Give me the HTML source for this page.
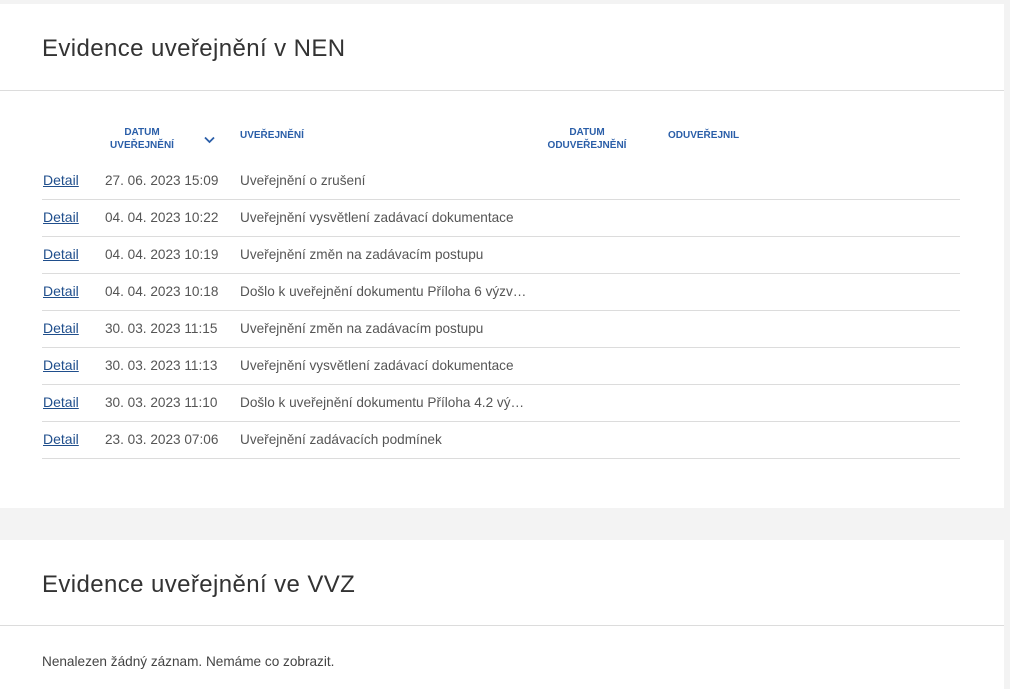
<!DOCTYPE html>
<html><head><meta charset="utf-8"><style>
body{margin:0;width:1010px;height:689px;background:#f3f3f3;font-family:"Liberation Sans",sans-serif;position:relative;overflow:hidden;color:#444}
.card{position:absolute;left:0;width:1004px;background:#fff}
.t{position:absolute;left:42px;font-size:24px;letter-spacing:0.4px;color:#333;white-space:nowrap}
.hr{position:absolute;left:0;width:1004px;height:1px;background:#dcdcdc}
.h{position:absolute;font-size:10px;font-weight:bold;color:#2a5ea8;text-align:center;line-height:13px}
.row{position:absolute;left:42px;width:918px;height:37px;border-bottom:1px solid #dcdcdc;font-size:13.6px;color:#555}
.row span{position:absolute;top:11px;white-space:nowrap}
.row span.l{top:10px}
a{color:#1f4e8c;text-decoration:underline;font-size:14px}
</style></head><body>
<div class="card" style="top:4px;height:504px">
<div class="t" style="top:31px">Evidence uveřejnění v NEN</div>
<div class="hr" style="top:86px"></div>
<div class="h" style="left:110px;top:122px;width:64px">DATUM<br>UVEŘEJNĚNÍ</div>
<svg style="position:absolute;left:204px;top:132px" width="11" height="8" viewBox="0 0 11 8"><path d="M1 1.5 L5.5 6 L10 1.5" stroke="#2a5ea8" stroke-width="1.8" fill="none"/></svg>
<div class="h" style="left:240px;top:125px">UVEŘEJNĚNÍ</div>
<div class="h" style="left:544px;top:122px;width:86px">DATUM<br>ODUVEŘEJNĚNÍ</div>
<div class="h" style="left:668px;top:125px">ODUVEŘEJNIL</div>
</div>
<div class="row" style="top:162px"><span class="l" style="left:1px"><a>Detail</a></span><span style="left:63px">27. 06. 2023 15:09</span><span style="left:198px">Uveřejnění o zrušení</span></div>
<div class="row" style="top:199px"><span class="l" style="left:1px"><a>Detail</a></span><span style="left:63px">04. 04. 2023 10:22</span><span style="left:198px">Uveřejnění vysvětlení zadávací dokumentace</span></div>
<div class="row" style="top:236px"><span class="l" style="left:1px"><a>Detail</a></span><span style="left:63px">04. 04. 2023 10:19</span><span style="left:198px">Uveřejnění změn na zadávacím postupu</span></div>
<div class="row" style="top:273px"><span class="l" style="left:1px"><a>Detail</a></span><span style="left:63px">04. 04. 2023 10:18</span><span style="left:198px">Došlo k uveřejnění dokumentu Příloha 6 výzv…</span></div>
<div class="row" style="top:310px"><span class="l" style="left:1px"><a>Detail</a></span><span style="left:63px">30. 03. 2023 11:15</span><span style="left:198px">Uveřejnění změn na zadávacím postupu</span></div>
<div class="row" style="top:347px"><span class="l" style="left:1px"><a>Detail</a></span><span style="left:63px">30. 03. 2023 11:13</span><span style="left:198px">Uveřejnění vysvětlení zadávací dokumentace</span></div>
<div class="row" style="top:384px"><span class="l" style="left:1px"><a>Detail</a></span><span style="left:63px">30. 03. 2023 11:10</span><span style="left:198px">Došlo k uveřejnění dokumentu Příloha 4.2 vý…</span></div>
<div class="row" style="top:421px"><span class="l" style="left:1px"><a>Detail</a></span><span style="left:63px">23. 03. 2023 07:06</span><span style="left:198px">Uveřejnění zadávacích podmínek</span></div>
<div class="card" style="top:540px;height:149px">
<div class="t" style="top:31px">Evidence uveřejnění ve VVZ</div>
<div class="hr" style="top:85px"></div>
<div style="position:absolute;left:42px;top:114px;font-size:13.6px;color:#444">Nenalezen žádný záznam. Nemáme co zobrazit.</div>
</div>
</body></html>
